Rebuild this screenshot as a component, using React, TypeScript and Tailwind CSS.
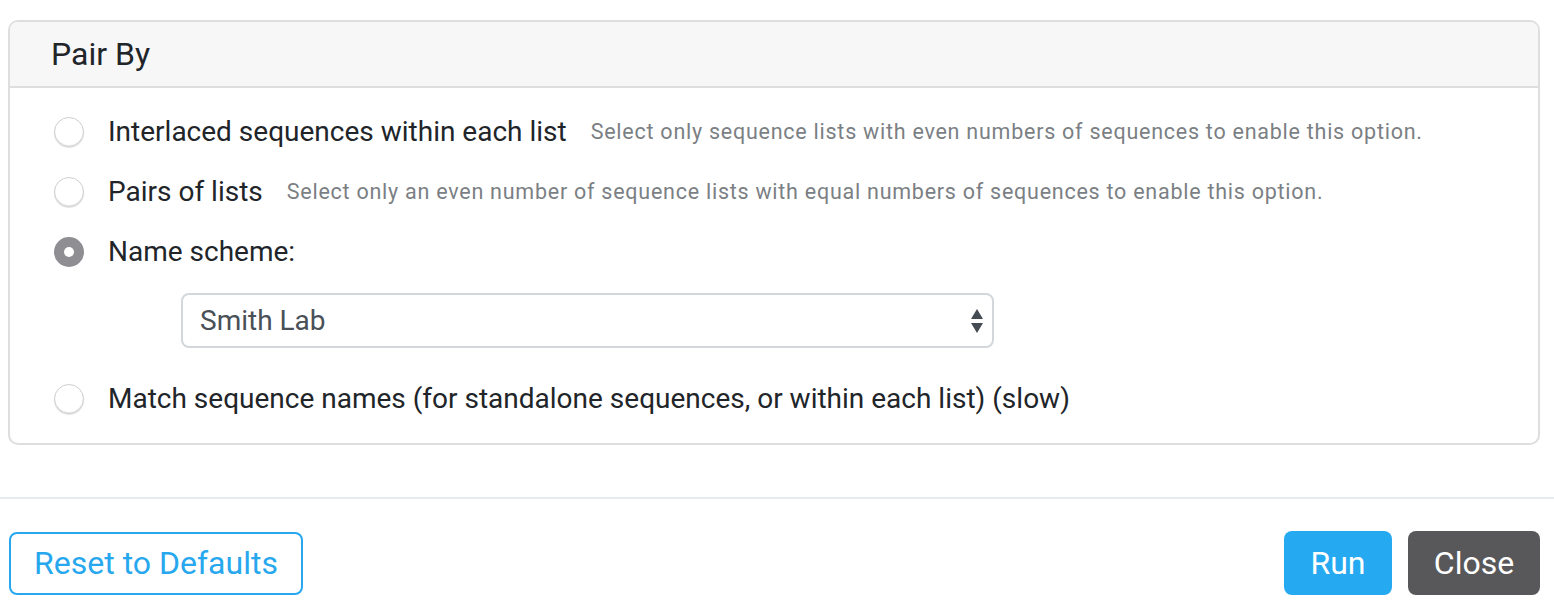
import React from "react";

function Radio({ checked }: { checked?: boolean }) {
  if (checked) {
    return (
      <span className="flex h-[30px] w-[30px] shrink-0 items-center justify-center rounded-full bg-[#8e8e93]">
        <span className="h-[10px] w-[10px] rounded-full bg-white" />
      </span>
    );
  }
  return (
    <span className="h-[30px] w-[30px] shrink-0 rounded-full border border-[#d0d0d0] bg-white shadow-[inset_0_-1px_1px_rgba(0,0,0,0.08),0_1px_1px_rgba(0,0,0,0.12)]" />
  );
}

function Row({ checked, label, hint }: { checked?: boolean; label: string; hint?: string }) {
  return (
    <div className="flex h-[60px] items-center pl-[44px]">
      <Radio checked={checked} />
      <span className="ml-[24px] text-[28px] text-[#212529]">{label}</span>
      {hint && <span className="ml-[24px] text-[21.5px] tracking-[0.75px] text-[#7b7f84]">{hint}</span>}
    </div>
  );
}

export default function App() {
  return (
    <div className="h-[610px] w-[1554px] overflow-hidden bg-white font-['Roboto',sans-serif]">
      <div className="px-[8px] pt-[20px]">
        <div className="w-[1532px] overflow-hidden rounded-[10px] border-2 border-[#dedede]">
          <div className="flex h-[66px] items-center border-b-2 border-[#dedede] bg-[#f7f7f7] pl-[41px] text-[32px] text-[#212529]">
            Pair By
          </div>
          <div className="flex flex-col pb-[14px] pt-[14px]">
            <Row
              label="Interlaced sequences within each list"
              hint="Select only sequence lists with even numbers of sequences to enable this option."
            />
            <Row
              label="Pairs of lists"
              hint="Select only an even number of sequence lists with equal numbers of sequences to enable this option."
            />
            <Row checked label="Name scheme:" />
            <div className="ml-[171px] mt-[11px] flex h-[55px] w-[813px] items-center justify-between rounded-[8px] border-2 border-[#d3d7db] pl-[17px] pr-[8px] text-[28px] text-[#495057]">
              <span>Smith Lab</span>
              <svg width="14" height="26" viewBox="0 0 14 26">
                <polygon points="7,1 13,11 1,11" fill="#444b52" />
                <polygon points="1,15 13,15 7,25" fill="#444b52" />
              </svg>
            </div>
            <div className="mt-[21px]">
              <Row label="Match sequence names (for standalone sequences, or within each list) (slow)" />
            </div>
          </div>
        </div>
      </div>
      <div className="mt-[52px] h-[2px] w-full bg-[#e9ecef]" />
      <div className="flex items-center justify-between pl-[9px] pr-[14px] pt-[32px]">
        <button className="flex h-[63px] w-[294px] items-center justify-center rounded-[8px] border-2 border-[#27a8ee] text-[32px] text-[#27a8ee]">
          Reset to Defaults
        </button>
        <div className="flex gap-[16px]">
          <button className="flex h-[64px] w-[108px] items-center justify-center rounded-[8px] bg-[#25a9f1] text-[32px] text-white">
            Run
          </button>
          <button className="flex h-[64px] w-[132px] items-center justify-center rounded-[8px] bg-[#58585a] text-[32px] text-white">
            Close
          </button>
        </div>
      </div>
    </div>
  );
}
